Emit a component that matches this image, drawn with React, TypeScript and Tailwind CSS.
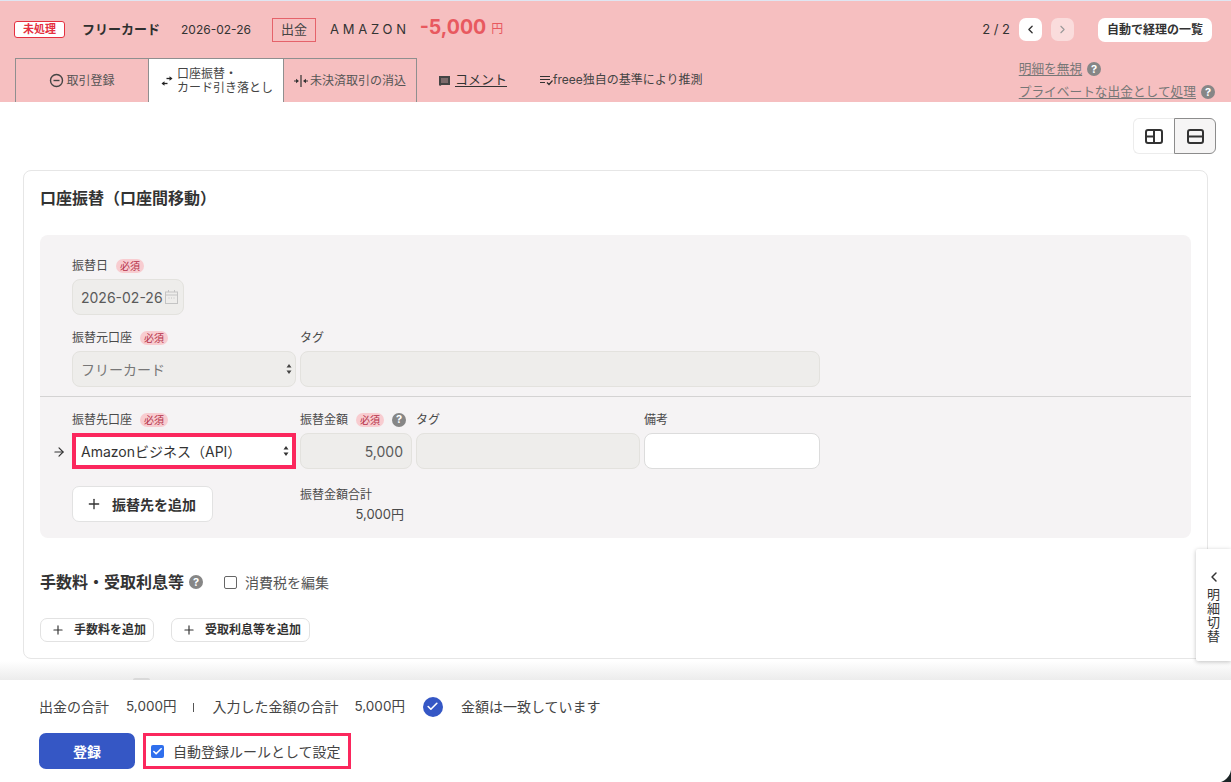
import React from 'react';
import { ChevronLeft, ChevronRight, ArrowRight, Plus, Check } from 'lucide-react';

const FONT = '[font-family:Inter,"Noto_Sans_CJK_JP",sans-serif]';

const Required = () => (
  <span className="ml-[8px] inline-flex h-[14px] w-[28px] items-center justify-center rounded-full bg-[#f8ccd0] text-[10px] leading-none text-[#b5324a]">必須</span>
);

const Help = ({ className = '' }: { className?: string }) => (
  <span className={`inline-flex h-[14px] w-[14px] items-center justify-center rounded-full bg-[#868686] text-[11px] font-bold leading-none text-white ${className}`}>?</span>
);

const SelectArrows = () => (
  <svg width="6" height="11" viewBox="0 0 6 11" className="absolute right-[3px] top-1/2 -translate-y-1/2" fill="currentColor">
    <path d="M3 0.5 5.5 4h-5zM3 10.5 0.5 7h5z" />
  </svg>
);

const Label = ({ children }: { children: React.ReactNode }) => (
  <div className="flex h-[20px] items-center pt-[1px] text-[12px] text-[#4a4a4a]">{children}</div>
);

const DisabledBox = ({ className = '', children }: { className?: string; children?: React.ReactNode }) => (
  <div className={`h-[36px] rounded-[8px] border border-[#e3e2de] bg-[#eeedeb] ${className}`}>{children}</div>
);

export default function App() {
  return (
    <div className={`relative h-[782px] w-[1231px] overflow-hidden bg-white ${FONT}`}>
      {/* Header */}
      <header className="h-[102px] border-t border-[#dfe6f2] bg-[#f6bfc0]">
        <div className="flex h-[57px] items-center pl-[14px] pr-[19px]">
          <span className="flex h-[17px] w-[51px] items-center justify-center rounded-[3px] border border-[#e5303f] bg-white text-[11px] font-bold text-[#e5303f]">未処理</span>
          <span className="ml-[17px] text-[13px] font-bold text-[#2f2f2f]">フリーカード</span>
          <span className="ml-[21px] text-[12px] text-[#333]">2026-02-26</span>
          <span className="ml-[21px] flex h-[24px] w-[44px] items-center justify-center border border-[#e5626a] text-[13px] text-[#444]">出金</span>
          <span className="ml-[14px] text-[13px] tracking-[0.29em] text-[#333]">AMAZON</span>
          <span className="mb-[4px] ml-[10px] text-[19.500px] font-bold leading-none text-[#e8595f]">-5,000</span>
          <span className="mb-[2px] ml-[5px] text-[12px] text-[#e8595f]">円</span>
          <div className="ml-auto flex items-center">
            <span className="text-[13px] text-[#333]">2 / 2</span>
            <span className="ml-[9px] flex h-[23px] w-[23px] items-center justify-center rounded-[7px] bg-white text-[#333]">
              <ChevronLeft size={13} strokeWidth={2.5} />
            </span>
            <span className="ml-[9px] flex h-[23px] w-[23px] items-center justify-center rounded-[7px] bg-[#fadcdc] text-[#999]">
              <ChevronRight size={13} strokeWidth={2} />
            </span>
            <button className="ml-[24px] flex h-[24px] w-[114px] items-center justify-center rounded-[7px] bg-white text-[12px] font-bold text-[#333]">自動で経理の一覧</button>
          </div>
        </div>
        <div className="flex h-[44px]">
          <div className="ml-[15px] flex">
            <div className="flex w-[134px] items-center justify-center gap-[2px] border-x border-t border-[#8f8f8f] text-[12px] text-[#555]">
              <svg width="15" height="15" viewBox="0 0 15 15" fill="none" stroke="#444" strokeWidth="1.4">
                <circle cx="7.5" cy="7.5" r="6" />
                <path d="M4.5 7.5h6" />
              </svg>
              取引登録
            </div>
            <div className="flex w-[134px] items-center justify-center gap-[4px] border-t border-[#8f8f8f] bg-white pl-[2px] text-[12px] leading-[14px] text-[#444]">
              <svg width="12" height="10" viewBox="0 0 12 10" fill="none" stroke="#222" strokeWidth="1.300">
                <path d="M5.500 2.500h5" />
                <path d="M8.500 0.300 11.500 2.500 8.500 4.700z" fill="#222" stroke="none" />
                <path d="M6.500 7.500h-5" />
                <path d="M3.500 5.300 0.500 7.500 3.500 9.700z" fill="#222" stroke="none" />
              </svg>
              <span>口座振替・<br />カード引き落とし</span>
            </div>
            <div className="flex w-[134px] items-center justify-center gap-[2px] border-x border-t border-[#8f8f8f] text-[12px] text-[#555]">
              <svg width="14" height="12" viewBox="0 0 14 12" fill="#333">
                <path d="M6.400 0h1.200v12H6.400zM0 5.400h2V3.800L5 6 2 8.200V6.600H0zM14 5.400h-2V3.800L9 6l3 2.200V6.600h2z" />
              </svg>
              未決済取引の消込
            </div>
          </div>
          <div className="ml-[22px] flex items-center text-[13px] text-[#333]">
            <svg width="11" height="11" viewBox="0 0 11 11" fill="#444">
              <path d="M0 1h11v9H2.500L1 11 0 10z" />
              <path d="M2 3h7v5H2z" fill="#7d6a6b" />
            </svg>
            <span className="ml-[5px] underline underline-offset-2">コメント</span>
          </div>
          <div className="ml-[31px] flex items-center pl-[2px] text-[12px] text-[#444]">
            <svg width="13" height="11" viewBox="0 0 13 11" fill="none" stroke="#333" strokeWidth="1.200">
              <path d="M0 1.500h10M0 4.500h10M0 7.500h5M7 7.500l2 2 3.500-4" />
            </svg>
            <span>freee独自の基準により推測</span>
          </div>
          <div className="ml-auto flex flex-col items-start pr-[16px] pt-[1px] text-[12.700px] text-[#777]">
            <div className="flex h-[20px] items-center">
              <span className="underline underline-offset-2">明細を無視</span>
              <Help className="ml-[5px]" />
            </div>
            <div className="mt-[3px] flex h-[20px] items-center">
              <span className="underline underline-offset-2">プライベートな出金として処理</span>
              <Help className="ml-[5px]" />
            </div>
          </div>
        </div>
      </header>

      {/* View switch */}
      <div className="flex h-[68px] justify-end pr-[15px] pt-[16px]">
        <div className="flex h-[36px]">
          <span className="flex w-[41px] items-center justify-center rounded-l-[6px] border-y border-l border-[#ececec]">
            <svg width="18" height="15" viewBox="0 0 18 15" fill="none" stroke="#333" strokeWidth="2">
              <rect x="1" y="1" width="16" height="13" rx="2" />
              <path d="M9 1v13M1 7.500h8" />
            </svg>
          </span>
          <span className="flex w-[42px] items-center justify-center rounded-r-[6px] border border-[#8c8c8c] bg-[#f6f5f5]">
            <svg width="17" height="15" viewBox="0 0 17 15" fill="none" stroke="#333" strokeWidth="2">
              <rect x="1" y="1" width="15" height="13" rx="2" />
              <path d="M1 7.500h15" />
            </svg>
          </span>
        </div>
      </div>

      {/* Main card */}
      <main className="mx-[23px] h-[489px] w-[1185px] rounded-[8px] border border-[#e6e6e6] px-[16px]">
        <h2 className="flex h-[64px] items-center pb-[10px] text-[16px] font-bold text-[#333]">口座振替（口座間移動）</h2>

        <section className="h-[303px] rounded-[8px] bg-[#f5f3f4]">
          <div className="h-[162px] border-b border-[#d4d3d3] pl-[32px] pt-[20px]">
            <Label>振替日<Required /></Label>
            <DisabledBox className="mt-[4px] flex w-[112px] items-center justify-between pl-[8px] pr-[5px] text-[14px] text-[#5a5a5a]">
              <span>2026-02-26</span>
              <svg width="13" height="14" viewBox="0 0 13 14" fill="none" stroke="#c4c4c4">
                <rect x="0.500" y="2" width="12" height="11.500" />
                <path d="M0.500 5h12M3.500 0v2M9.500 0v2M3.500 8h1M6 8h1M8.500 8h1" />
              </svg>
            </DisabledBox>
            <div className="mt-[12px] flex gap-[4px]">
              <div className="w-[224px]">
                <Label>振替元口座<Required /></Label>
                <DisabledBox className="relative mt-[4px] flex items-center pl-[8px] text-[14px] text-[#777]">
                  フリーカード
                  <span className="text-[#444]"><SelectArrows /></span>
                </DisabledBox>
              </div>
              <div className="w-[520px]">
                <Label>タグ</Label>
                <DisabledBox className="mt-[4px]" />
              </div>
            </div>
          </div>

          <div className="flex pt-[12px]">
            <div className="flex w-[32px] items-start justify-end pr-[6px] pt-[36px] text-[#333]">
              <ArrowRight size={14} strokeWidth={2} />
            </div>
            <div className="w-[224px]">
              <Label>振替先口座<Required /></Label>
              <div className="relative mt-[4px] flex h-[36px] items-center border-[4px] border-[#fb275d] bg-white pl-[5px] text-[14px] text-[#333]">
                Amazonビジネス（API）
                <span className="text-[#333]"><SelectArrows /></span>
              </div>
              <button className="mt-[17px] flex h-[36px] w-[141px] items-center rounded-[7px] border border-[#e2e2e2] bg-white pl-[13px] text-[14px] font-bold text-[#333]">
                <Plus size={16} strokeWidth={2} />
                <span className="ml-[10px]">振替先を追加</span>
              </button>
            </div>
            <div className="ml-[4px] w-[112px]">
              <Label>振替金額<Required /><Help className="ml-[8px]" /></Label>
              <DisabledBox className="mt-[4px] flex items-center justify-end pr-[8px] text-[14px] text-[#5a5a5a]">5,000</DisabledBox>
              <div className="mt-[17px] whitespace-nowrap text-[12px] leading-[18px] text-[#4a4a4a]">振替金額合計</div>
              <div className="mt-[1px] pr-[8px] text-right text-[13px] leading-[18px] text-[#4a4a4a]">5,000円</div>
            </div>
            <div className="ml-[4px] w-[224px]">
              <Label>タグ</Label>
              <DisabledBox className="mt-[4px]" />
            </div>
            <div className="ml-[4px] w-[176px]">
              <Label>備考</Label>
              <div className="mt-[4px] h-[36px] rounded-[8px] border border-[#dcdcdc] bg-white" />
            </div>
          </div>
        </section>

        <div className="mt-[32px] flex h-[24px] items-center">
          <h3 className="text-[16px] font-bold text-[#333]">手数料・受取利息等</h3>
          <Help className="ml-[5px]" />
          <span className="ml-[21px] h-[13px] w-[13px] rounded-[2px] border border-[#666] bg-white" />
          <span className="ml-[8px] text-[14px] text-[#555]">消費税を編集</span>
        </div>

        <div className="mt-[24px] flex gap-[17px]">
          <button className="flex h-[24px] w-[114px] items-center rounded-[7px] border border-[#e2e2e2] bg-white pl-[10px] text-[12px] font-bold text-[#333]">
            <Plus size={14} strokeWidth={2} />
            <span className="ml-[9px]">手数料を追加</span>
          </button>
          <button className="flex h-[24px] w-[139px] items-center rounded-[7px] border border-[#e2e2e2] bg-white pl-[10px] text-[12px] font-bold text-[#333]">
            <Plus size={14} strokeWidth={2} />
            <span className="ml-[9px]">受取利息等を追加</span>
          </button>
        </div>
      </main>

      <div className="mt-[2px] h-[19px] bg-gradient-to-b from-white to-[#ececec]" />

      {/* Footer */}
      <footer className="h-[102px] bg-white pl-[39px]">
        <div className="flex h-[53px] items-center text-[14px] text-[#444]">
          <span>出金の合計</span>
          <span className="ml-[17px] text-[13.500px]">5,000円</span>
          <span className="ml-[17px] mt-[2px] h-[9px] w-px bg-[#555]" />
          <span className="ml-[18px]">入力した金額の合計</span>
          <span className="ml-[16px] text-[13.500px]">5,000円</span>
          <span className="ml-[18px] flex h-[20px] w-[20px] items-center justify-center rounded-full bg-[#3557c5] text-white">
            <Check size={13} strokeWidth={3} />
          </span>
          <span className="ml-[18px]">金額は一致しています</span>
        </div>
        <div className="flex items-center">
          <button className="h-[36px] w-[96px] rounded-[7px] bg-[#3557c5] text-[14px] font-bold text-white">登録</button>
          <div className="ml-[8px] flex h-[36px] w-[208px] items-center border-[3px] border-[#fb275d] pl-[5px]">
            <span className="flex h-[13px] w-[13px] items-center justify-center rounded-[2px] bg-[#2f6fed] text-white">
              <Check size={11} strokeWidth={3.5} />
            </span>
            <span className="ml-[9px] whitespace-nowrap text-[14px] text-[#444]">自動登録ルールとして設定</span>
          </div>
        </div>
      </footer>

      {/* scroll handle peeking above the footer */}
      <span className="absolute left-[133px] top-[678px] h-[2px] w-[17px] rounded-t-full bg-[#d9d9d9]" />

      {/* 明細切替 side tab */}
      <div className="absolute right-0 top-[549px] flex h-[112px] w-[35px] flex-col items-center rounded-l-[2px] bg-white pt-[20px] shadow-[0_1px_4px_rgba(0,0,0,0.25)]">
        <ChevronLeft size={16} strokeWidth={2.2} className="text-[#333]" />
        <div className="mt-[2px] text-center text-[13px] leading-[14px] text-[#333]">明<br />細<br />切<br />替</div>
      </div>

      {/* window corner */}
      <svg width="10" height="12" viewBox="0 0 10 12" className="absolute bottom-0 right-0" fill="#1c2526">
        <path d="M10 0V12H0C5 10 9 6 10 0z" />
      </svg>
    </div>
  );
}
